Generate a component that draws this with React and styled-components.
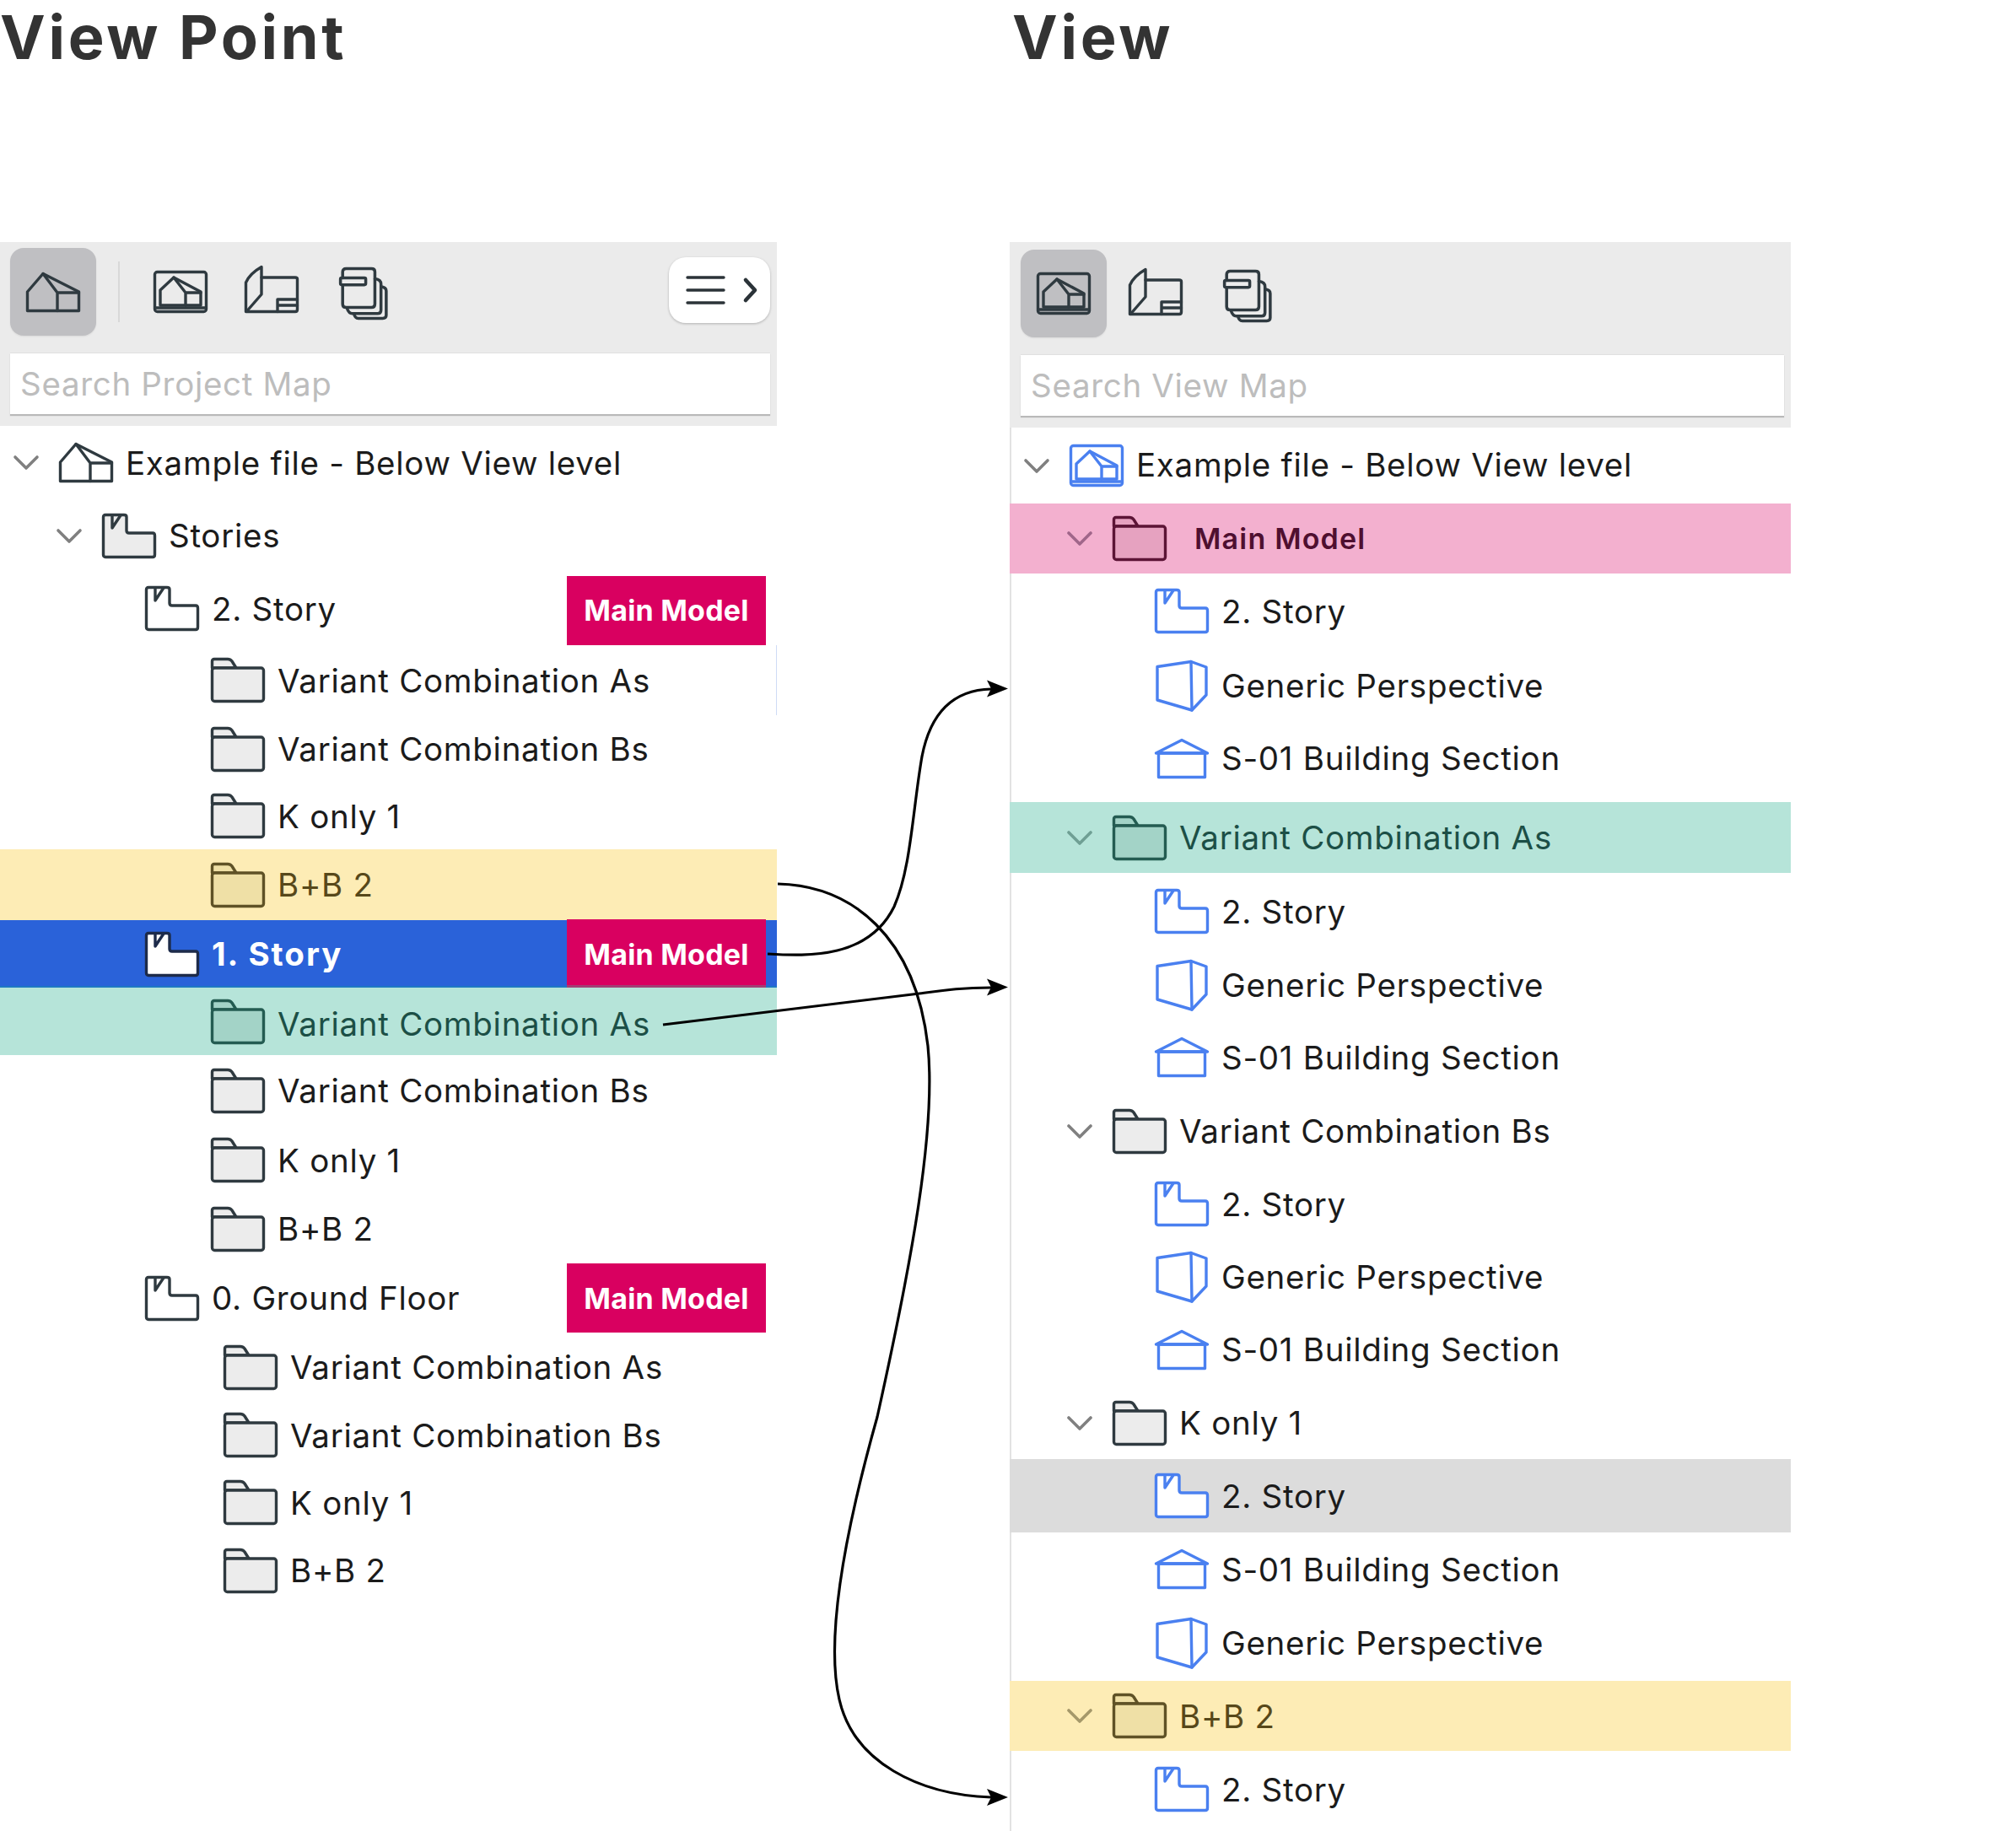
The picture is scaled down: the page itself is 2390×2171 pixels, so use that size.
import React from "react";
import styled, { createGlobalStyle } from "styled-components";

const Global = createGlobalStyle`
  html, body { margin: 0; padding: 0; background: #fff; }
  body { font-family: "Inter", "Liberation Sans", sans-serif; }
`;

const Page = styled.div`
  position: relative;
  width: 2390px;
  height: 2171px;
  overflow: hidden;
  display: grid;
  grid-template-columns: 921px 926px;
  column-gap: 276px;
  grid-template-rows: 287px auto;
`;
const Heading = styled.h1`
  margin: 0;
  padding-left: ${(p) => p.$x || 0}px;
  font-size: 72px;
  line-height: 88px;
  font-weight: 650;
  letter-spacing: 3.7px;
  color: #333;
`;
const Panel = styled.section`
  display: flex;
  flex-direction: column;
  min-width: 0;
  ${(p) => p.$ruled && "box-shadow: inset 2px 0 0 #e2e2e2;"}
`;
const Toolbar = styled.div`
  height: ${(p) => p.$h}px;
  box-sizing: border-box;
  background: #ebebeb;
  padding: ${(p) => p.$pt}px 8px 0 ${(p) => p.$pl}px;
  display: flex;
  flex-direction: column;
`;
const ToolRow = styled.div`
  display: flex;
  align-items: flex-start;
  height: ${(p) => p.$h}px;
  flex: none;
`;
const ActiveTool = styled.div`
  width: 102px;
  height: 104px;
  border-radius: 16px;
  background: #bfbfc2;
  box-shadow: 0 1px 2px rgba(0, 0, 0, 0.08);
  display: flex;
  align-items: center;
  justify-content: center;
  flex: none;
`;
const Divider = styled.div`
  width: 2px;
  height: 72px;
  margin: 16px 0 0 26px;
  background: #d8d8d8;
`;
const ToolIcon = styled.div`
  margin-left: ${(p) => p.$ml}px;
  margin-top: ${(p) => p.$mt}px;
  display: flex;
  flex: none;
`;
const MenuButton = styled.div`
  margin-left: auto;
  margin-top: 11px;
  width: 120px;
  height: 78px;
  box-sizing: border-box;
  border-radius: 20px;
  background: #fff;
  box-shadow: 0 1px 3px rgba(0, 0, 0, 0.25);
  display: flex;
  align-items: center;
  justify-content: center;
`;
const Search = styled.div`
  height: 73px;
  flex: none;
  box-sizing: border-box;
  background: #fff;
  border-top: 1px solid #e0e0e0;
  box-shadow: 0 2px 1px #b9b9b9;
  padding-left: 12px;
  display: flex;
  align-items: center;
  font-size: 38.5px;
  letter-spacing: 0.68px;
  color: #bdbdbd;
`;
const tones = {
  plain: "--bg:transparent;--ink:#2f3a40;--shade:#ececec;--text:#1b1b1b;--chev:#808080;",
  yellow: "--bg:#fdecb5;--ink:#5f5226;--shade:#efe0a6;--text:#57481a;--chev:#a5986a;",
  teal: "--bg:#b6e4d9;--ink:#245c52;--shade:#a3d3c7;--text:#1c4f46;--chev:#6f9f94;",
  pink: "--bg:#f3b0cf;--ink:#5c1436;--shade:#e6a2c0;--text:#4f0f30;--chev:#a0668a;",
  grey: "--bg:#dcdcdc;--ink:#2f3a40;--shade:#ececec;--text:#1b1b1b;--chev:#808080;",
  blue: "--bg:#2a62d9;--ink:#1d2b4a;--shade:#fff;--text:#fff;--chev:#fff;",
};
const Row = styled.div`
  ${(p) => tones[p.$tone || "plain"]}
  height: ${(p) => p.$h}px;
  margin-top: ${(p) => p.$gap || 0}px;
  box-sizing: border-box;
  padding-left: ${(p) => p.$x - 54}px;
  background: var(--bg);
  display: flex;
  align-items: center;
  flex: none;
  ${(p) => p.$edge && "box-shadow: inset -1px 0 0 #cfdcf6;"}
  ${(p) => p.$tone === "blue" && "box-shadow: inset 0 -2px 0 #1f78c4;"}
`;
const ChevronSlot = styled.div`
  width: 54px;
  flex: none;
  display: flex;
  align-items: center;
`;
const Label = styled.span`
  margin-left: ${(p) => p.$ml || 15}px;
  margin-top: ${(p) => p.$mt || 0}px;
  font-size: ${(p) => (p.$tag ? 34 : 38.5)}px;
  letter-spacing: ${(p) => (p.$tag ? 1.2 : p.$strong ? 2 : 0.72)}px;
  font-weight: ${(p) => (p.$tag ? 600 : p.$strong ? 700 : 400)};
  color: var(--text);
  white-space: nowrap;
`;
const Badge = styled.div`
  margin-left: auto;
  margin-right: 13px;
  margin-top: ${(p) => p.$mt || 0}px;
  width: 236px;
  height: 82px;
  flex: none;
  background: #d90060;
  display: flex;
  align-items: center;
  justify-content: center;
  font-size: 34px;
  font-weight: 650;
  letter-spacing: 0.2px;
  color: #fff;
  white-space: nowrap;
  ${(p) => p.$dim && "box-shadow: inset 0 -4px 0 #a23f75;"}
`;
const Glyph = styled.svg`
  display: block;
  flex: none;
  overflow: visible;
  stroke-width: 3.4;
  stroke-linejoin: round;
  stroke-linecap: round;
`;
const Overlay = styled.svg`
  position: absolute;
  left: 0;
  top: 0;
  pointer-events: none;
`;

const BLUE = "#4a80f0";
const DARK = "#2f3a40";

const Chevron = () => (
  <Glyph width="30" height="17" viewBox="0 0 30 17" fill="none" style={{ stroke: "var(--chev)", strokeWidth: 3.6 }}>
    <path d="M2 2 L15 15 L28 2" />
  </Glyph>
);
const House = ({ c = DARK }) => (
  <Glyph width="64" height="47" viewBox="0 0 64 47" stroke={c} fill="none">
    <path d="M1.5 45.5 V23 L20 1.5 L62.5 23 V45.5 Z" />
    <path d="M20 1.5 L37 24 H62.5 M37 24 V45.5" />
  </Glyph>
);
const FramedHouse = ({ c = DARK }) => (
  <Glyph width="64" height="50" viewBox="0 0 64 50" stroke={c} fill="none">
    <rect x="1.5" y="1.5" width="61" height="47" rx="3" />
    <path d="M8 41 V23 L24 8 L56 25 V41 Z" />
    <path d="M24 8 L38 26 H56 M38 26 V41" />
    <path d="M2 44 H62" />
  </Glyph>
);
const FloorPlan = ({ c = DARK }) => (
  <Glyph width="64" height="56" viewBox="0 0 64 56" stroke={c} fill="none">
    <path d="M20 1.5 C12 6 5 12 1.5 20 V54.5 H60 Q62.5 54.5 62.5 52 V16 Q62.5 14 60 14 H20 Z" />
    <path d="M20 14 V34 L3 53.5" />
    <path d="M62.5 40 H39 V54.5 M39 47 H62.5" />
  </Glyph>
);
const Layers = ({ c = DARK }) => (
  <Glyph width="58" height="62" viewBox="0 0 56 60" stroke={c} fill="none">
    <path d="M4 12 V5 Q4 1.5 8 1.5 H37 Q41 1.5 41 5 V42 Q41 46 37 46 H8 Q4 46 4 42 V20" />
    <rect x="1.5" y="12" width="29" height="8" rx="1.5" />
    <path d="M41 13 Q48 14 48 19 V49 Q48 53 44 53 H15 Q11 53 9 47" />
    <path d="M48 22 Q54 23 54 27 V55 Q54 58.5 50 58.5 H22 Q18 58.5 17 53" />
  </Glyph>
);
const Story = ({ c = DARK, fill = "none" }) => (
  <Glyph width="64" height="53" viewBox="0 0 64 53" stroke={c} fill={fill}>
    <path d="M1.5 4 Q1.5 1.5 4 1.5 H26 Q29 1.5 29 4 V20 Q29 23 32 23 H60 Q62.5 23 62.5 26 V48.5 Q62.5 51.5 60 51.5 H4 Q1.5 51.5 1.5 48.5 Z" />
    <path d="M12 2 V17 L22 2" fill="none" />
  </Glyph>
);
const Folder = () => (
  <Glyph width="64" height="53" viewBox="0 0 64 53" stroke="var(--ink)" fill="var(--shade)">
    <path d="M1.5 12 V4 Q1.5 1.5 4 1.5 H20 Q23 1.5 25 4 L30 12 Z" />
    <rect x="1.5" y="12" width="61" height="39.5" rx="3" />
  </Glyph>
);
const Perspective = ({ c = BLUE }) => (
  <Glyph width="64" height="60" viewBox="0 0 64 60" stroke={c} fill="none">
    <path d="M3 7.5 L43 1.5 L61 8 V41 L44 59 L3 47 Z" />
    <path d="M43 1.5 L44 59" />
  </Glyph>
);
const Section = ({ c = BLUE }) => (
  <Glyph width="64" height="47" viewBox="0 0 64 47" stroke={c} fill="none">
    <path d="M1.5 17 L32 1.5 L62.5 17 Z" />
    <rect x="4.5" y="17" width="55" height="28.5" />
  </Glyph>
);
const MenuGlyph = () => (
  <Glyph width="84" height="34" viewBox="0 0 84 34" stroke="#2b3338" fill="none">
    <path d="M4 2 H47 M4 17 H47 M4 32 H47" />
    <path d="M73 5 L84 17 L73 29" strokeWidth="4.6" />
  </Glyph>
);

const leftRows = [
  { h: 87, x: 70, text: "Example file - Below View level", icon: <House />, chev: true },
  { h: 86, x: 121, text: "Stories", icon: <Story fill="#ececec" />, chev: true },
  { h: 87, x: 172, text: "2. Story", icon: <Story />, badge: true, badgeMt: 4 },
  { h: 83, x: 250, text: "Variant Combination As", icon: <Folder />, edge: true },
  { h: 80, x: 250, text: "Variant Combination Bs", icon: <Folder /> },
  { h: 79, x: 250, text: "K only 1", icon: <Folder /> },
  { h: 84, x: 250, text: "B+B 2", icon: <Folder />, tone: "yellow" },
  { h: 80, x: 172, text: "1. Story", icon: <Story c="#1d2b4a" fill="#fff" />, tone: "blue", strong: true, badge: true, dim: true },
  { h: 80, x: 250, text: "Variant Combination As", icon: <Folder />, tone: "teal", mt: 6 },
  { h: 84, x: 250, text: "Variant Combination Bs", icon: <Folder /> },
  { h: 81, x: 250, text: "K only 1", icon: <Folder /> },
  { h: 82, x: 250, text: "B+B 2", icon: <Folder /> },
  { h: 82, x: 172, text: "0. Ground Floor", icon: <Story />, badge: true },
  { h: 82, x: 265, text: "Variant Combination As", icon: <Folder /> },
  { h: 79, x: 265, text: "Variant Combination Bs", icon: <Folder /> },
  { h: 81, x: 265, text: "K only 1", icon: <Folder /> },
  { h: 80, x: 265, text: "B+B 2", icon: <Folder /> },
];

const rightRows = [
  { h: 90, x: 71, text: "Example file - Below View level", icon: <FramedHouse c={BLUE} />, chev: true, mt: -2 },
  { h: 83, x: 122, text: "Main Model", icon: <Folder />, tone: "pink", tag: true, chev: true, ml: 33 },
  { h: 89, x: 172, text: "2. Story", icon: <Story c={BLUE} /> },
  { h: 87, x: 172, text: "Generic Perspective", icon: <Perspective /> },
  { h: 86, x: 172, text: "S-01 Building Section", icon: <Section /> },
  { h: 84, gap: 9, x: 122, text: "Variant Combination As", icon: <Folder />, tone: "teal", chev: true },
  { h: 91, x: 172, text: "2. Story", icon: <Story c={BLUE} /> },
  { h: 83, x: 172, text: "Generic Perspective", icon: <Perspective /> },
  { h: 89, x: 172, text: "S-01 Building Section", icon: <Section /> },
  { h: 86, x: 122, text: "Variant Combination Bs", icon: <Folder />, chev: true },
  { h: 87, x: 172, text: "2. Story", icon: <Story c={BLUE} /> },
  { h: 85, x: 172, text: "Generic Perspective", icon: <Perspective /> },
  { h: 88, x: 172, text: "S-01 Building Section", icon: <Section /> },
  { h: 86, x: 122, text: "K only 1", icon: <Folder />, chev: true },
  { h: 87, x: 172, text: "2. Story", icon: <Story c={BLUE} fill="#fff" />, tone: "grey" },
  { h: 87, x: 172, text: "S-01 Building Section", icon: <Section /> },
  { h: 87, x: 172, text: "Generic Perspective", icon: <Perspective /> },
  { h: 83, gap: 2, x: 122, text: "B+B 2", icon: <Folder />, tone: "yellow", chev: true },
  { h: 91, x: 172, text: "2. Story", icon: <Story c={BLUE} /> },
];

const TreeRow = ({ r }) => (
  <Row $h={r.h} $x={r.x} $tone={r.tone} $gap={r.gap} $edge={r.edge}>
    <ChevronSlot>{r.chev && <Chevron />}</ChevronSlot>
    {r.icon}
    <Label $strong={r.strong} $tag={r.tag} $ml={r.ml} $mt={r.mt}>{r.text}</Label>
    {r.badge && <Badge $dim={r.dim} $mt={r.badgeMt}>Main Model</Badge>}
  </Row>
);

const Arrowhead = ({ x, y }) => (
  <polygon points={`${x},${y} ${x - 25},${y - 10} ${x - 20},${y} ${x - 25},${y + 10}`} fill="#000" stroke="none" />
);

export default function App() {
  return (
    <Page>
      <Global />
      <Heading>View Point</Heading>
      <Heading $x={3}>View</Heading>

      <Panel>
        <Toolbar $h={218} $pt={7} $pl={12}>
          <ToolRow $h={124}>
            <ActiveTool><House /></ActiveTool>
            <Divider />
            <ToolIcon $ml={40} $mt={27}><FramedHouse /></ToolIcon>
            <ToolIcon $ml={44} $mt={21}><FloorPlan /></ToolIcon>
            <ToolIcon $ml={48} $mt={23}><Layers /></ToolIcon>
            <MenuButton><MenuGlyph /></MenuButton>
          </ToolRow>
          <Search>Search Project Map</Search>
        </Toolbar>
        {leftRows.map((r, i) => <TreeRow key={i} r={r} />)}
      </Panel>

      <Panel $ruled>
        <Toolbar $h={220} $pt={9} $pl={13}>
          <ToolRow $h={124}>
            <ActiveTool><FramedHouse /></ActiveTool>
            <ToolIcon $ml={26} $mt={22}><FloorPlan /></ToolIcon>
            <ToolIcon $ml={48} $mt={24}><Layers /></ToolIcon>
          </ToolRow>
          <Search>Search View Map</Search>
        </Toolbar>
        {rightRows.map((r, i) => <TreeRow key={i} r={r} />)}
      </Panel>

      <Overlay width="2390" height="2171" viewBox="0 0 2390 2171" fill="none" stroke="#000" strokeWidth="3.2">
        <path d="M910 1131 C960 1134 1030 1136 1060 1075 C1080 1030 1082 960 1093 897 C1103 845 1130 818 1175 817" />
        <Arrowhead x={1195} y={816.5} />
        <path d="M786 1215 L1090 1178 C1120 1174 1140 1171 1175 1171" />
        <Arrowhead x={1195} y={1170.5} />
        <path d="M922 1048 C1010 1050 1085 1110 1100 1240 C1110 1340 1080 1500 1040 1680 C995 1840 980 1950 995 2015 C1012 2090 1090 2128 1175 2131" />
        <Arrowhead x={1195} y={2131} />
      </Overlay>
    </Page>
  );
}
